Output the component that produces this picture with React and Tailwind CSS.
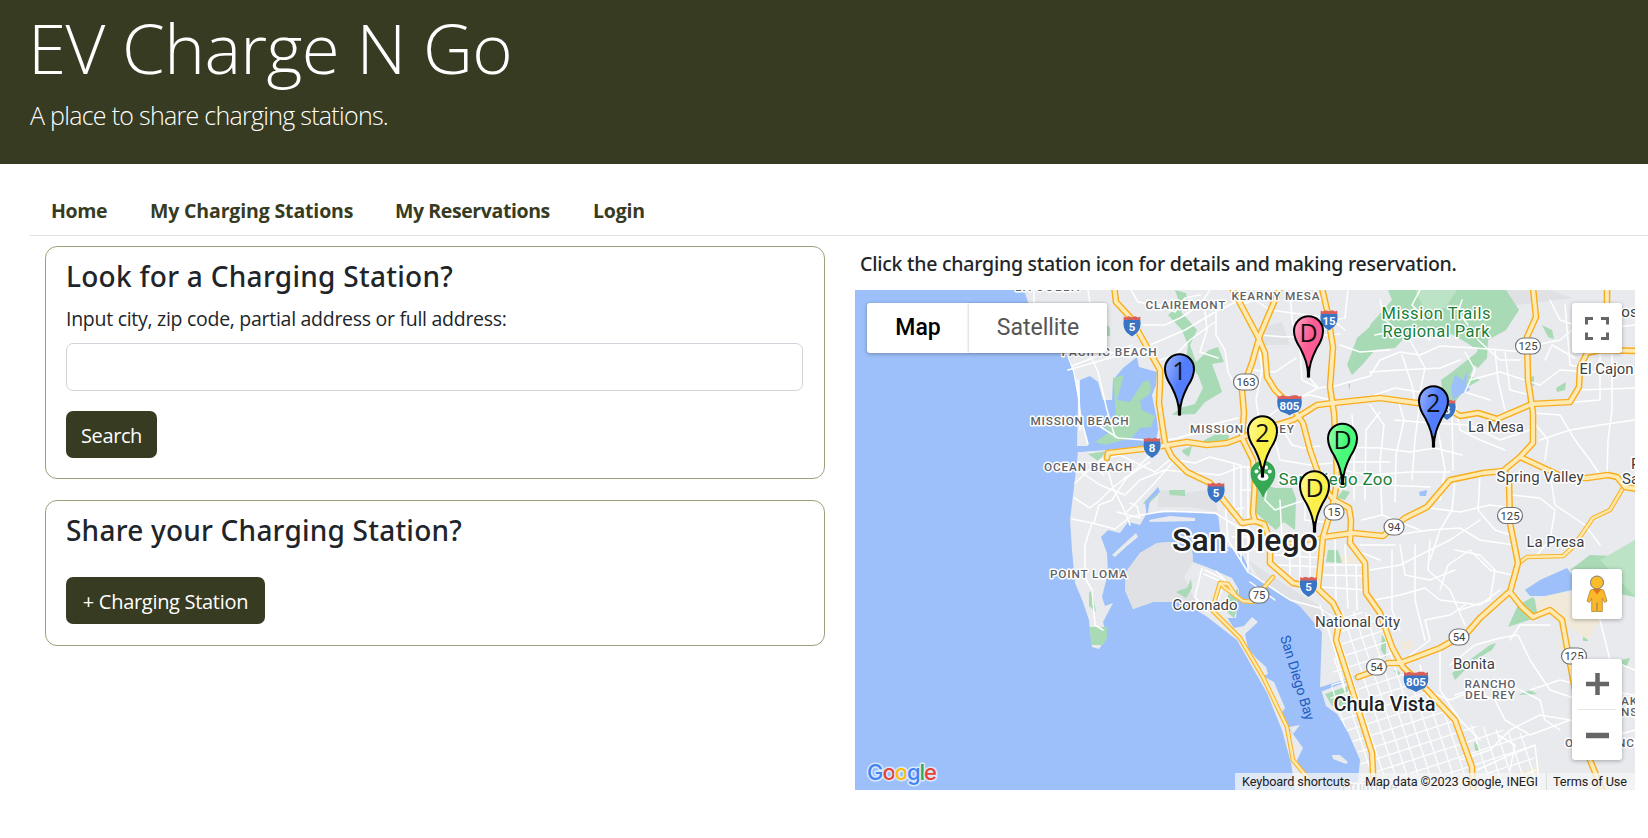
import React from "react";

const LAND = [
  // mainland
  "1024,290 1028,302 1050,330 1068,353 1075,373 1078,400 1077,446 1088,446 1080,408 1080,380 1090,376 1098,382 1103,400 1112,400 1113,380 1123,368 1137,357 1139,367 1157,372 1156,385 1152,395 1157,420 1158,430 1145,446 1107,450 1078,452 1074,487 1070,520 1072,550 1075,583 1083,602 1089,620 1092,647 1099,649 1107,637 1103,622 1113,603 1105,606 1102,597 1108,573 1107,553 1101,537 1108,530 1120,533 1128,522 1140,525 1147,513 1187,512 1218,514 1222,548 1232,552 1243,556 1250,572 1262,582 1276,592 1300,606 1312,620 1322,632 1320,686 1326,706 1337,714 1347,730 1360,760 1357,790 1640,790 1640,290",
  // coronado and the strand
  "1133,609 1125,590 1126,572 1140,553 1157,543 1173,542 1192,550 1193,562 1207,567 1232,578 1239,590 1236,618 1227,618 1222,610 1234,628 1244,626 1252,617 1258,622 1245,634 1248,648 1256,658 1266,667 1268,674 1263,676 1274,682 1285,708 1282,712 1290,730 1303,748 1297,760 1310,790 1295,790 1291,763 1282,730 1267,693 1237,640 1206,616 1196,610 1183,602 1153,602",
];

const GRAY = [
  "1133,609 1125,590 1126,572 1140,553 1157,543 1173,542 1192,550 1193,562 1184,577 1196,602 1153,602",
  "1160,490 1185,493 1212,489 1218,512 1190,507 1157,507",
  "1247,560 1300,594 1330,612 1322,632 1300,606 1262,582",
  "1490,290 1550,290 1572,298 1510,306",
  "1252,330 1282,322 1290,345 1262,345",
];

const GREEN = [
  "1175,290 1186,293 1188,303 1181,312 1190,322 1197,330 1190,345 1196,362 1209,350 1218,347 1224,362 1212,364 1218,380 1222,392 1205,402 1195,414 1172,415 1180,408 1195,404 1203,388 1198,375 1186,360 1188,345 1182,330 1168,315 1180,305",
  "1352,375 1347,365 1357,338 1372,325 1392,322 1400,340 1375,350 1362,365",
  "1370,350 1370,325 1392,300 1388,290 1506,290 1519,310 1506,330 1488,340 1487,358 1478,368 1470,362 1478,350 1462,340 1440,328 1412,330 1395,348",
  "1441,380 1452,372 1480,350 1470,376 1480,380 1466,388 1455,402 1443,398",
  "1113,378 1124,375 1117,400 1130,402 1143,382 1149,380 1151,388 1150,394 1140,401 1142,410 1155,416 1151,427 1140,428 1128,442 1108,446 1095,442 1110,432 1102,424 1116,415",
  "1088,454 1107,451 1098,461",
  "1199,443 1216,434 1229,435 1228,442 1214,446",
  "1182,450 1192,446 1189,457 1183,453",
  "1256,490 1258,482 1275,488 1292,488 1296,498 1295,530 1284,522 1276,530 1264,520 1256,513",
  "1169,490 1185,490 1185,496 1170,495",
  "1143,503 1156,490 1158,495 1147,505",
  "1090,627 1107,627 1107,638 1103,645 1091,645",
  "1089,593 1092,590 1096,612 1089,606",
  "1180,590 1187,588 1191,579 1192,588 1186,598 1176,592",
  "1228,595 1238,589 1238,606 1234,618 1227,612",
  "1328,550 1338,550 1342,563 1326,562",
  "1382,635 1386,640 1386,658 1381,650",
  "1393,670 1400,672 1399,676",
  "1325,694 1348,686 1347,706 1332,706",
  "1529,620 1508,627 1518,605 1533,597 1543,612",
  "1452,673 1490,645 1496,643 1492,650 1475,660 1455,680",
  "1518,695 1530,690 1537,694",
  "1570,570 1590,555 1612,556 1635,540 1635,597 1610,592 1590,575",
  "1542,325 1552,330 1554,339 1548,337",
  "1556,388 1566,382 1565,390 1557,392",
  "1528,378 1534,376 1534,386 1528,383",
  "1343,490 1350,492 1345,500 1337,498",
  "1583,635 1588,633 1588,641 1583,641",
  "1474,742 1478,745 1480,753 1475,750",
  "1620,660 1630,658 1626,668",
  "1101,318 1110,328 1110,336 1100,336",
];

const SAND = [
  "1535,600 1560,592 1585,598 1605,612 1588,640 1568,626 1555,612 1538,618",
  "1342,555 1357,555 1357,563 1342,564",
  "1400,642 1412,640 1413,648 1403,650",
  "1508,775 1540,766 1540,790 1500,790",
  "1558,645 1570,640 1570,660",
];

const WATER = [
  "1078,447 1108,444 1140,436 1158,430 1156,440 1110,449 1078,452",
  "1145,502 1158,487 1160,492 1150,500 1147,518",
  "1455,375 1463,380 1468,370 1466,384 1470,390 1461,394 1453,400 1451,388",
  "1525,590 1540,580 1567,568 1572,575 1572,590 1545,596 1530,596",
  "1419,492 1427,490 1426,496 1420,496",
  "1318,688 1362,674 1362,676 1320,692",
  "1350,385 1348,383 1350,390",
  "1226,546 1240,551 1236,556 1244,560 1238,564",
];

const HIGHWAYS = [
  "1114,285 1116,302 1130,317 1143,340 1160,370 1160,383 1159,403 1165,443 1172,457 1187,472 1210,483 1225,502 1242,523 1255,521 1264,524 1270,540 1270,563 1293,583 1317,588 1333,603 1340,617 1336,640 1348,677 1372,753 1374,792",
  "1107,458 1108,453 1143,449 1187,442 1207,445 1227,443 1243,437 1267,428 1293,420 1317,405 1333,403 1380,398 1417,403 1447,408 1460,416 1478,413 1497,419 1532,404 1570,402 1579,387 1580,367 1587,353 1600,350 1638,351",
  "1232,288 1258,337 1265,353 1267,377 1275,390 1292,407 1303,423 1310,450 1323,487 1334,500 1349,508 1351,520 1350,543 1365,563 1366,593 1380,613 1392,647 1403,667 1427,690 1455,720 1472,767 1473,792",
  "1322,288 1327,310 1333,347 1330,387 1334,413 1336,450 1337,480 1334,500 1323,537 1318,588",
  "1280,288 1260,335 1252,363 1242,390 1244,413 1242,438 1253,460 1255,480 1253,513 1255,521",
  "1324,537 1353,533 1383,536 1405,518 1427,507 1450,480 1483,473 1503,471 1520,457 1533,443 1533,413 1528,380 1527,337 1536,317 1533,288",
  "1505,472 1509,480 1510,523 1518,563 1510,592 1522,607 1533,617 1550,610 1562,620 1567,647 1575,690 1590,760 1603,792",
  "1358,677 1375,671 1388,663 1400,663 1440,648 1467,633 1480,618 1508,593",
  "1520,457 1533,463 1563,477 1587,478 1608,475 1617,477 1625,487 1638,489",
  "1607,288 1607,306",
];

const MINOR_HIGHWAYS = [
  "1273,577 1262,590 1253,602 1243,601 1225,588 1220,583 1212,610 1240,638 1263,677 1287,727 1293,760 1307,777",
  "1220,583 1228,584 1236,596",
  "1623,488 1610,510 1593,518 1573,547 1563,556 1527,557 1519,563",
  "1275,545 1300,542 1324,537",
];

const STREETS = [
  "1034,290 1034,305", "1088,290 1090,303 1107,320", "1068,370 1110,358 1150,345 1185,330 1215,312 1240,300",
  "1072,366 1100,355 1118,352 1132,345", "1090,354 1098,372 1107,410 1115,437", "1078,380 1080,415 1088,444",
  "1090,420 1118,438 1158,441 1180,438 1210,425 1238,418", "1062,340 1074,372 1079,400 1080,430",
  "1131,290 1138,302 1160,305 1175,312 1185,298 1200,295", "1143,325 1165,325 1180,318 1200,305 1210,290",
  "1205,312 1207,330 1200,352 1218,358", "1216,310 1216,335 1225,350 1228,372 1235,385", "1160,360 1175,355 1190,340 1215,322",
  "1240,305 1255,300 1270,310 1300,314 1330,318 1345,330", "1260,335 1285,337 1312,336 1340,334", "1290,290 1292,320 1300,350 1302,380 1318,388",
  "1296,320 1320,322 1345,318 1348,290", "1308,376 1318,388 1335,386 1370,376 1380,360 1400,352 1420,355 1440,346 1475,348 1500,350 1527,352",
  "1180,437 1215,430 1258,424 1280,408 1318,388", "1258,337 1262,370 1256,400 1260,425", "1252,370 1275,372 1296,358",
  "1287,398 1310,395 1330,400", "1105,460 1112,485 1125,512 1130,525", "1078,470 1100,485 1125,495 1140,480 1165,470 1185,472",
  "1074,498 1090,508 1100,500 1110,490 1125,478 1150,462", "1072,519 1092,523 1115,529", "1094,523 1099,505 1112,500 1125,480 1150,455",
  "1092,523 1085,545 1085,578 1092,590 1095,625 1103,630", "1075,483 1100,460 1120,455 1155,472 1172,458", "1127,512 1150,488 1175,460",
  "1115,529 1130,517 1165,511 1215,513 1240,528", "1088,462 1104,475", "1117,512 1140,518 1137,506 1130,503",
  "1176,460 1195,463 1210,457 1240,465", "1187,472 1220,475 1240,467 1253,467", "1225,500 1228,540 1248,572 1290,600 1320,608 1340,622",
  "1234,465 1234,520", "1241,465 1241,560", "1248,467 1248,572", "1240,490 1253,490", "1232,537 1262,537", "1235,545 1260,550", "1226,510 1244,508",
  "1270,470 1265,500 1275,510 1290,505 1305,500", "1275,440 1280,460 1310,465 1345,462 1390,462", "1283,430 1292,445 1303,448 1320,446",
  "1354,500 1354,440 1352,415", "1365,500 1366,430 1380,412", "1382,515 1380,462 1384,425 1370,405", "1395,502 1396,455 1404,420 1398,400",
  "1340,447 1380,448 1410,452 1435,448 1462,455", "1340,470 1370,475 1410,472 1450,472", "1345,485 1380,485 1430,487",
  "1380,300 1385,320 1410,340 1425,368 1420,392 1395,388 1375,395", "1370,372 1400,370 1440,368 1460,360", "1402,355 1412,385 1415,402",
  "1375,335 1410,328 1430,340", "1440,400 1438,430 1445,470 1440,500", "1452,412 1453,470", "1420,400 1415,440 1412,480",
  "1455,402 1460,430 1480,440 1505,450", "1395,420 1430,423 1470,425 1500,440 1530,430", "1465,352 1475,370 1465,392 1490,400",
  "1478,340 1500,360 1520,360", "1495,350 1498,380 1505,410", "1505,352 1510,390 1530,395", "1470,380 1500,372 1540,385 1560,370 1590,372",
  "1536,345 1560,340 1572,330", "1545,360 1552,345 1575,358", "1565,305 1568,340 1570,365 1580,367", "1550,300 1560,320 1590,330 1635,325",
  "1590,372 1612,370 1635,374", "1600,355 1600,400 1575,402", "1612,352 1612,410 1608,440 1607,475", "1580,390 1635,388",
  "1533,413 1560,415 1575,440 1590,460 1600,475", "1540,440 1570,430 1600,425 1635,420", "1545,460 1548,440 1536,425", "1550,474 1555,505 1585,525 1600,545",
  "1512,495 1540,498 1555,510 1550,540 1535,557", "1480,475 1478,510 1495,530 1511,535", "1455,480 1452,510 1440,530 1430,560", "1430,508 1460,512 1490,505 1512,508",
  "1395,535 1430,530 1460,528 1480,540 1514,545", "1440,590 1448,565 1470,550 1490,570 1512,575", "1400,545 1405,575 1430,580 1455,570",
  "1370,570 1400,565 1430,550 1450,540 1480,520", "1375,600 1400,595 1425,588 1440,600 1480,605 1500,590", "1392,550 1392,610 1400,630",
  "1415,545 1415,600 1425,640", "1430,540 1428,570 1450,590 1465,625", "1460,610 1490,600 1495,570 1480,555 1455,550",
  "1325,565 1365,565", "1322,575 1366,576", "1320,587 1366,590", "1300,550 1300,580", "1310,545 1310,585", "1290,548 1290,580",
  "1275,555 1325,558", "1275,565 1322,567", "1335,540 1336,600", "1345,545 1348,608", "1356,565 1357,610",
  "1360,545 1395,545", "1355,550 1380,560", "1362,520 1382,515 1420,530", "1305,500 1305,520 1325,522", "1280,500 1282,540",
  "1410,655 1430,640 1425,620 1450,615 1465,605", "1420,665 1425,690 1450,700 1500,680 1540,700", "1440,650 1440,690 1460,720 1480,740",
  "1450,665 1475,645 1500,638 1518,635 1530,660 1550,690 1580,700", "1455,695 1470,690 1495,700 1505,720 1530,735 1570,720 1600,740 1635,730",
  "1460,760 1490,750 1510,730 1540,715 1570,720", "1477,770 1510,755 1535,745 1540,790", "1530,690 1560,680 1600,690 1635,695",
  "1498,735 1515,745 1510,770", "1540,700 1545,720 1560,730", "1600,620 1610,660 1635,670", "1510,640 1520,625 1550,625",
  "1202,568 1195,597 1208,612", "1205,570 1225,580", "1204,574 1222,582", "1216,571 1225,580 1218,600",
  "1250,582 1275,600", "1320,605 1335,650 1345,690", "1390,350 1360,352 1340,345", "1420,290 1412,305 1425,318",
  "1462,300 1458,312 1468,325",
];

const toPath = (pts) => "M" + pts.trim().split(" ").join("L");

function Poly({ list, fill }) {
  return (
    <g fill={fill}>
      {list.map((p) => (
        <polygon key={p} points={p} />
      ))}
    </g>
  );
}

function Lines({ list, color, width }) {
  return (
    <g fill="none" stroke={color} strokeWidth={width} strokeLinejoin="round" strokeLinecap="round">
      {list.map((p) => (
        <path key={p} d={toPath(p)} />
      ))}
    </g>
  );
}

function Label({ x, y, children, size = 15, color = "#3c4043", weight = 400, spacing = 0, w, anchor = "middle" }) {
  return (
    <text
      x={x}
      y={y}
      fontSize={size}
      fill={color}
      fontWeight={weight}
      letterSpacing={spacing}
      textAnchor={anchor}
      textLength={w}
      stroke="#fff"
      strokeWidth={size > 25 ? 4 : 3}
      strokeLinejoin="round"
      paintOrder="stroke"
    >
      {children}
    </text>
  );
}

function Area(props) {
  return <Label size={11.8} color="#5f6368" weight={500} {...props} />;
}

function Interstate({ x, y, n }) {
  const wide = n.length > 2;
  const s = wide ? 12 : 8.3;
  return (
    <g transform={`translate(${x} ${y})`}>
      <path d={`M${-s},-6 H${s} Q${s + 1.5},2 ${s - 3},7 Q3,9 0,11 Q-3,9 ${-s + 3},7 Q${-s - 1.5},2 ${-s},-6Z`} fill="#3a74c4" stroke="#fff" strokeWidth="1" paintOrder="stroke" />
      <path d={`M${-s},-5.5 V-9 l2,1 l3,-1.3 ${wide ? "l3.5,1" : ""} L0,-8.3 ${wide ? "l3.5,-1" : ""} L${s - 5},-9.3 L${s - 2},-8 L${s},-9 V-5.5Z`} fill="#d9605a" />
      <text y="5.2" textAnchor="middle" fontSize={11.5} fontWeight="700" fill="#fff">{n}</text>
    </g>
  );
}

function Route({ x, y, n }) {
  const w = n.length > 2 ? 25 : 20;
  return (
    <g transform={`translate(${x} ${y})`}>
      <rect x={-w / 2} y={-8} width={w} height={16} rx={8} fill="#fff" stroke="#6f7276" strokeWidth="1.2" />
      <text y="4" textAnchor="middle" fontSize="11.3" fill="#3c4043">{n}</text>
    </g>
  );
}

const PIN_FILL = {
  blue: ["#9db6ff", "#527dfc"],
  pink: ["#ffa8c4", "#fb5c93"],
  yellow: ["#fffb9c", "#fbf04a"],
  green: ["#9bffb0", "#4bf97a"],
};

function Pin({ x, y, color, label }) {
  return (
    <g transform={`translate(${x} ${y})`}>
      <path
        d="M0,-1 C-1,-13 -3,-19 -8,-29 C-12,-35 -14.5,-40 -14.5,-46.500 A14.5,14.8 0 0 1 14.5,-46.500 C14.5,-40 12,-35 8,-29 C3,-19 1,-13 0,-1Z"
        fill={`url(#pin-${color})`}
        stroke="#000"
        strokeWidth="2"
        strokeLinejoin="round"
      />
      <path d="M-1.6,-11 H1.6 V0 H-1.6Z" />
      <text y="-36" textAnchor="middle" fontSize="25" fill="#111" fontFamily="Open Sans, Roboto, sans-serif">{label}</text>
    </g>
  );
}

function StreetGrid() {
  const out = [];
  for (let i = 0; i < 24; i++) out.push(`M-60,${i * 12} H160`);
  for (let i = -5; i < 14; i++) out.push(`M${i * 11},0 V290`);
  return (
    <g clipPath="url(#cv)">
      <path transform="translate(1330 610) rotate(-18)" d={out.join(" ")} stroke="#fff" strokeWidth="1.2" fill="none" />
    </g>
  );
}

function MapDrawing() {
  return (
    <svg viewBox="855 290 780 500" className="block h-full w-full" fontFamily="Roboto, sans-serif">
      <defs>
        {Object.entries(PIN_FILL).map(([k, [a, b]]) => (
          <linearGradient key={k} id={`pin-${k}`} x1="0" y1="0" x2="1" y2="0.6">
            <stop offset="0" stopColor={a} />
            <stop offset="0.55" stopColor={b} />
          </linearGradient>
        ))}
        <clipPath id="cv">
          <polygon points="1342,610 1378,614 1403,668 1430,695 1455,722 1530,735 1540,790 1362,790 1360,755 1330,700 1335,650" />
        </clipPath>
      </defs>
      <rect x="855" y="290" width="780" height="500" fill="#9dc0fa" />
      <Poly list={LAND} fill="#e8eaed" />
      <Poly list={GRAY} fill="#dfe1e5" />
      <Poly list={GREEN} fill="#a8dab5" />
      <polygon points="1415,290 1457,290 1445,308 1425,310" fill="#bce3c6" />
      <polygon points="1600,560 1635,540 1635,597" fill="#bce3c6" />
      <Poly list={SAND} fill="#f1e9d9" />
      <Poly list={WATER} fill="#9dc0fa" />
      <g fill="#e8eaed">
        <polygon points="1112,555 1125,543 1136,533 1138,537 1127,546 1115,557" />
        <polygon points="1149,520 1170,516 1195,518 1195,521 1150,522" />
        <polygon points="1332,755 1340,755 1348,762 1346,764 1333,759" />
        <polygon points="1289,727 1300,725 1293,734" />
      </g>
      <StreetGrid />
      <Lines list={STREETS} color="#fff" width={1.5} />
      <Lines list={MINOR_HIGHWAYS} color="#f9b529" width={4.6} />
      <Lines list={MINOR_HIGHWAYS} color="#ffe9ae" width={2.4} />
      <Lines list={HIGHWAYS} color="#f8ad1c" width={6.6} />
      <Lines list={HIGHWAYS} color="#ffeab4" width={3.8} />

      <Interstate x={1132} y={325.5} n="5" />
      <Interstate x={1329} y={319.5} n="15" />
      <Interstate x={1152} y={447} n="8" />
      <Interstate x={1289.5} y={404.5} n="805" />
      <Interstate x={1216} y={492} n="5" />
      <Interstate x={1308.5} y={586} n="5" />
      <Interstate x={1416} y={681} n="805" />
      <Interstate x={1447} y={409} n="8" />
      <Route x={1246} y={382} n="163" />
      <Route x={1528} y={346} n="125" />
      <Route x={1510} y={515.5} n="125" />
      <Route x={1574} y={656} n="125" />
      <Route x={1334} y={512} n="15" />
      <Route x={1394} y={527} n="94" />
      <Route x={1259} y={595} n="75" />
      <Route x={1459} y={637} n="54" />
      <Route x={1376.5} y={667} n="54" />

      <Area x={1047} y={290.5} w={64}>LA JOLLA</Area>
      <Area x={1185.5} y={309} w={80}>CLAIREMONT</Area>
      <Area x={1275.5} y={300} w={88}>KEARNY MESA</Area>
      <Area x={1109} y={356} w={95}>PACIFIC BEACH</Area>
      <Area x={1079.5} y={425} w={98}>MISSION BEACH</Area>
      <Area x={1088} y={470.5} w={88}>OCEAN BEACH</Area>
      <Area x={1242} y={432.5} w={104}>MISSION VALLEY</Area>
      <Area x={1088.5} y={577.5} w={77}>POINT LOMA</Area>
      <Area x={1490} y={687.5} w={51}>RANCHO</Area>
      <Area x={1490} y={698.5} w={50}>DEL REY</Area>
      <Area x={1621} y={705} anchor="start" spacing={1}>AKE</Area>
      <Area x={1621} y={716} anchor="start" spacing={1}>NS</Area>
      <Area x={1565} y={747} anchor="start" w={78}>OTAY RANCH</Area>

      <Label x={1245} y={550.5} size={32} weight={500} color="#202124" w={146}>San Diego</Label>
      <Label x={1384.5} y={710.5} size={20} weight={500} color="#202124" w={102}>Chula Vista</Label>
      <Label x={1205} y={609.5} w={65}>Coronado</Label>
      <Label x={1357.5} y={626.5} w={85}>National City</Label>
      <Label x={1474} y={669} w={42}>Bonita</Label>
      <Label x={1496} y={432} w={56}>La Mesa</Label>
      <Label x={1540} y={482} w={87}>Spring Valley</Label>
      <Label x={1555.5} y={547} w={58}>La Presa</Label>
      <Label x={1606.5} y={374} w={54}>El Cajon</Label>
      <Label x={1612} y={317} anchor="start">Bostonia</Label>
      <Label x={1631} y={469} anchor="start">Rancho</Label>
      <Label x={1622} y={484} anchor="start">San Diego</Label>
      <Label x={1369.5} y={791.5} w={56} color="#80868b">Fruitdale</Label>
      <Label x={1436} y={319} size={16.5} color="#188038" w={109}>Mission Trails</Label>
      <Label x={1436} y={337} size={16.5} color="#188038" w={107}>Regional Park</Label>
      <Label x={1335.5} y={485} size={17} color="#188038" w={114}>San Diego Zoo</Label>
      <text fontSize="14" fill="#1f5dbf" textLength="88" transform="translate(1280 637) rotate(73)">San Diego Bay</text>

      <path d="M1263,497 C1260,488 1251,484 1251,473 A12,12 0 0 1 1275,473 C1275,484 1266,488 1263,497Z" fill="#34a853" stroke="#27913f" strokeWidth="0.6" />
      <g fill="#fff">
        <ellipse cx="1263" cy="477" rx="5.5" ry="3.8" />
        <circle cx="1256.5" cy="471.5" r="2" />
        <circle cx="1260.5" cy="467.5" r="2" />
        <circle cx="1266" cy="467.5" r="2" />
        <circle cx="1269.7" cy="471.5" r="2" />
      </g>

      <Pin x={1308.5} y={377.5} color="pink" label="D" />
      <Pin x={1179.5} y={415.5} color="blue" label="1" />
      <Pin x={1433.5} y={447.5} color="blue" label="2" />
      <Pin x={1262.5} y={477.5} color="yellow" label="2" />
      <Pin x={1342.5} y={485} color="green" label="D" />
      <Pin x={1314.5} y={532.5} color="yellow" label="D" />

      <text x="867" y="779.5" fontSize="22" fontFamily="Inter, sans-serif" fontWeight="500" textLength="70" stroke="#dbe8fc" strokeWidth="3" strokeLinejoin="round" paintOrder="stroke">
        <tspan fill="#4285f4">G</tspan>
        <tspan fill="#ea4335">o</tspan>
        <tspan fill="#fbbc04">o</tspan>
        <tspan fill="#4285f4">g</tspan>
        <tspan fill="#34a853">l</tspan>
        <tspan fill="#ea4335">e</tspan>
      </text>
    </svg>
  );
}

function Pegman() {
  return (
    <svg width="22" height="38" viewBox="0 0 22 38">
      <path d="M4.5,15 Q11,12 17.500,15 L21,26 L18.500,27.500 L16.300,23 V36.500 H11.500 V28 H10.500 V36.500 H5.700 V23 L3.500,27.500 L1,26Z" fill="#fbb829" stroke="#a77a2a" strokeWidth="0.7" />
      <path d="M6.500,14 H15.500 L11,19.500Z" fill="#e2761b" />
      <circle cx="11" cy="7.500" r="6.500" fill="#fbbc2c" stroke="#777" strokeWidth="1" />
    </svg>
  );
}

function MapPane() {
  return (
    <div className="relative h-[500px] w-[780px] overflow-hidden font-[Roboto,sans-serif]">
      <MapDrawing />
      <div className="absolute left-3 top-[13px] flex h-[50px] rounded-[3px] bg-white text-[23px] leading-[50px] shadow-[0_1px_4px_rgba(0,0,0,0.3)]">
        <div className="w-[102px] text-center font-medium text-black">Map</div>
        <div className="w-[138px] text-center text-[#565656] shadow-[-1px_0_2px_rgba(0,0,0,0.15)]">Satellite</div>
      </div>
      <div className="absolute left-[717px] top-[13px] flex h-[50px] w-[50px] items-center justify-center rounded-[3px] bg-white shadow-[0_1px_4px_rgba(0,0,0,0.3)]">
        <svg width="24" height="23" viewBox="0 0 24 23" fill="none" stroke="#666" strokeWidth="3">
          <path d="M1.500,7.500 V1.500 H8 M16,1.500 H22.500 V7.500 M22.500,15.500 V21.500 H16 M8,21.500 H1.500 V15.500" />
        </svg>
      </div>
      <div className="absolute left-[717px] top-[279px] flex h-[50px] w-[50px] items-center justify-center rounded-[3px] bg-white shadow-[0_1px_4px_rgba(0,0,0,0.3)]">
        <Pegman />
      </div>
      <div className="absolute left-[717px] top-[369px] flex h-[101px] w-[50px] flex-col items-center rounded-[3px] bg-white shadow-[0_1px_4px_rgba(0,0,0,0.3)]">
        <svg className="h-[50px] w-full" viewBox="0 0 50 50"><path d="M14,25 H37 M25.500,14 V36" stroke="#666" strokeWidth="4.500" /></svg>
        <div className="h-px w-[38px] bg-[#e6e6e6]" />
        <svg className="h-[50px] w-full" viewBox="0 0 50 50"><path d="M14,25.500 H37" stroke="#666" strokeWidth="5.500" /></svg>
      </div>
      <div className="absolute bottom-0 right-0 flex h-[17px] bg-[#f5f5f5]/75 text-[12.700px] leading-[17px] tracking-[-0.1px] text-[#222]">
        <span className="w-[123px] pl-[7px]">Keyboard shortcuts</span>
        <span className="w-[188px] pl-[7px]">Map data ©2023 Google, INEGI</span>
        <span className="w-[89px] border-l border-[#ddd] pl-[6px]">Terms of Use</span>
      </div>
    </div>
  );
}

const BUTTON = "flex h-[47px] items-center justify-center rounded-[7px] bg-[#373b22] pt-[2px] text-[20px] text-white";

export default function App() {
  return (
    <div className="min-h-[838px] w-full overflow-hidden bg-white font-['Open_Sans','Noto_Sans',sans-serif] text-[#212529]">
      <header className="flex h-[164px] flex-col bg-[#373b22] pl-[30px] text-white">
        <h1 className="-ml-[2px] whitespace-nowrap pt-1 text-[69px] font-light leading-[86px] tracking-[-0.6px]">EV Charge N Go</h1>
        <p className="pt-2 text-[25px] font-light leading-[34px] tracking-[-0.72px]">A place to share charging stations.</p>
      </header>
      <div className="flex flex-col pl-[30px] pt-[23px]">
        <nav className="flex h-[49px] items-center border-b border-[#dee2e6] text-[19.500px] font-bold tracking-[-0.4px] text-[#373b22]">
          <a className="w-[99px] whitespace-nowrap pl-[21px]">Home</a>
          <a className="w-[245px] whitespace-nowrap pl-[21px] tracking-[-0.15px]">My Charging Stations</a>
          <a className="w-[198px] whitespace-nowrap pl-[21px]">My Reservations</a>
          <a className="whitespace-nowrap pl-[21px] tracking-[-0.2px]">Login</a>
        </nav>
        <main className="flex gap-[30px] pl-[15px] pt-[10px]">
          <div className="flex w-[780px] flex-col gap-[21px]">
            <section className="flex h-[233px] flex-col items-start rounded-[12px] border border-[#9ba17b] pl-5 pr-[21px] pt-[11px]">
              <h2 className="font-['Noto_Sans',sans-serif] text-[28px] font-medium leading-[36px] tracking-[0.28px]">Look for a Charging Station?</h2>
              <label className="pt-[10px] text-[19.500px] leading-[30px] tracking-[-0.28px]">Input city, zip code, partial address or full address:</label>
              <input className="mt-[9px] h-[48px] w-full rounded-[7px] border border-[#ced4da] px-4 outline-none" />
              <button className={`${BUTTON} mt-5 w-[91px] tracking-[-0.4px]`}>Search</button>
            </section>
            <section className="flex h-[146px] flex-col items-start rounded-[12px] border border-[#9ba17b] pl-5 pr-[21px] pt-[11px]">
              <h2 className="font-['Noto_Sans',sans-serif] text-[28px] font-medium leading-[36px] tracking-[0.22px]">Share your Charging Station?</h2>
              <button className={`${BUTTON} mt-[29px] w-[199px] tracking-[-0.3px]`}>+ Charging Station</button>
            </section>
          </div>
          <div className="flex flex-col">
            <h3 className="h-[44px] whitespace-nowrap pl-[5px] pt-[3px] font-['Noto_Sans',sans-serif] text-[19.500px] font-medium leading-[30px] tracking-[-0.24px]">
              Click the charging station icon for details and making reservation.
            </h3>
            <MapPane />
          </div>
        </main>
      </div>
    </div>
  );
}
